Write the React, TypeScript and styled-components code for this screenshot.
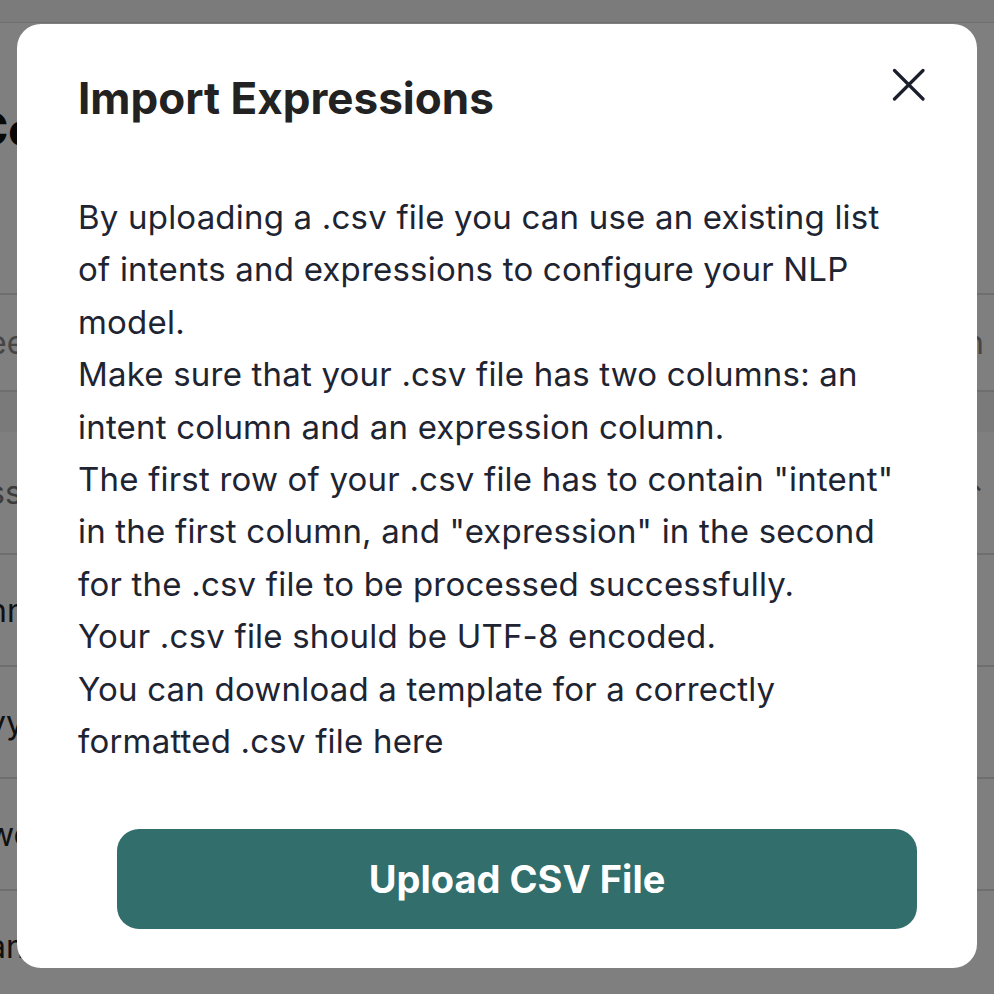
import styled, { createGlobalStyle } from 'styled-components';

/*Global*/
const GlobalStyle = createGlobalStyle`
  html, body {
    margin: 0;
    padding: 0;
    width: 994px;
    height: 994px;
    overflow: hidden;
    background: #ffffff;
    font-family: 'Inter', 'Liberation Sans', sans-serif;
  }
`;

/*Page behind the dialog*/
const Page = styled.div`
  position: relative;
  width: 994px;
  height: 994px;
  overflow: hidden;
  background: #ffffff;
`;

const TopBar = styled.div`
  height: 22px;
  background: #f6f6f6;
  border-bottom: 1px solid #dedede;
`;

const Content = styled.div`
  margin-left: -26px;
  width: 1040px;
`;

const PageTitle = styled.h1`
  box-sizing: border-box;
  margin: 0;
  padding: 78px 0 0 0;
  height: 172px;
  font-size: 46px;
  line-height: 56px;
  font-weight: 800;
  color: #111111;
`;

const Toolbar = styled.div`
  display: flex;
  justify-content: flex-end;
  align-items: center;
  height: 98px;
  padding-right: 40px;
  border-bottom: 2px solid #dcdcdc;
  font-size: 34px;
  color: #111111;
`;

const SearchRow = styled.div`
  display: flex;
  justify-content: space-between;
  align-items: center;
  height: 95px;
  padding: 0 30px 0 14px;
  border-bottom: 2px solid #dcdcdc;
  font-size: 32px;
  color: #8a8a8a;
`;

const HeadBand = styled.div`
  height: 40px;
  background: #f4f4f4;
`;

const Row = styled.div<{ $tall?: boolean; $muted?: boolean }>`
  display: flex;
  justify-content: space-between;
  align-items: center;
  height: ${(p) => (p.$tall ? '121px' : '110px')};
  padding: 0 30px 0 14px;
  border-bottom: 2px solid #dcdcdc;
  font-size: 32px;
  color: ${(p) => (p.$muted ? '#777777' : '#222222')};
`;

/*Dialog*/
const Overlay = styled.div`
  position: absolute;
  inset: 0;
  background: rgba(0, 0, 0, 0.5);
  display: flex;
  align-items: flex-start;
  justify-content: center;
  padding-top: 24px;
`;

const Dialog = styled.div`
  width: 960px;
  height: 944px;
  box-sizing: border-box;
  background: #ffffff;
  border-radius: 24px;
  padding: 44px 53px 0 61px;
  display: flex;
  flex-direction: column;
`;

const Header = styled.div`
  display: flex;
  justify-content: space-between;
  align-items: flex-start;
  flex-shrink: 0;
`;

const Title = styled.h2`
  margin: 0;
  padding-top: 5px;
  font-size: 44px;
  line-height: 50px;
  font-weight: 700;
  color: #222222;
`;

const CloseButton = styled.button`
  border: none;
  background: none;
  padding: 0;
  margin: 0 -1px 0 0;
  width: 34px;
  height: 34px;
  display: flex;
  align-items: center;
  justify-content: center;
  cursor: pointer;
  color: #1a1f2b;
`;

const Body = styled.div`
  margin-top: 68px;
  flex-shrink: 0;
  font-size: 33px;
  letter-spacing: 0.2px;
  line-height: 52.4px;
  color: #1e2432;
`;

const Line = styled.p`
  margin: 0;
`;

const UploadButton = styled.button`
  margin: 62px 0 0 39px;
  flex-shrink: 0;
  width: 800px;
  height: 100px;
  border: none;
  border-radius: 22px;
  background: #316e6c;
  color: #ffffff;
  font-family: 'Inter', 'Liberation Sans', sans-serif;
  font-size: 38px;
  font-weight: 700;
  cursor: pointer;
`;

const CloseIcon = () => (
  <svg width="34" height="34" viewBox="0 0 34 34" fill="none">
    <path d="M3.5 2.5 L32 31 M32 2.5 L3.5 31" stroke="currentColor" strokeWidth="3.2" strokeLinecap="round" />
  </svg>
);

const App = () => {
  return (
    <>
      <GlobalStyle />
      <Page>
        <TopBar />
        <Content>
          <PageTitle>Configuration</PageTitle>
          <Toolbar>Add expression</Toolbar>
          <SearchRow>
            <span>ee</span>
            <span>Search</span>
          </SearchRow>
          <HeadBand />
          <Row $tall $muted>
            <span>ss</span>
            <span>⌃</span>
          </Row>
          <Row>
            <span>nn</span>
          </Row>
          <Row>
            <span>yy</span>
          </Row>
          <Row>
            <span>wo</span>
          </Row>
          <Row>
            <span>an</span>
          </Row>
        </Content>
        <Overlay>
          <Dialog>
            <Header>
              <Title>Import Expressions</Title>
              <CloseButton aria-label="Close">
                <CloseIcon />
              </CloseButton>
            </Header>
            <Body>
              <Line>
                By uploading a .csv file you can use an existing list
                <br />
                of intents and expressions to configure your NLP
                <br />
                model.
              </Line>
              <Line>
                Make sure that your .csv file has two columns: an
                <br />
                intent column and an expression column.
              </Line>
              <Line>
                The first row of your .csv file has to contain "intent"
                <br />
                in the first column, and "expression" in the second
                <br />
                for the .csv file to be processed successfully.
              </Line>
              <Line>Your .csv file should be UTF-8 encoded.</Line>
              <Line>
                You can download a template for a correctly
                <br />
                formatted .csv file here
              </Line>
            </Body>
            <UploadButton>Upload CSV File</UploadButton>
          </Dialog>
        </Overlay>
      </Page>
    </>
  );
};

export default App;
